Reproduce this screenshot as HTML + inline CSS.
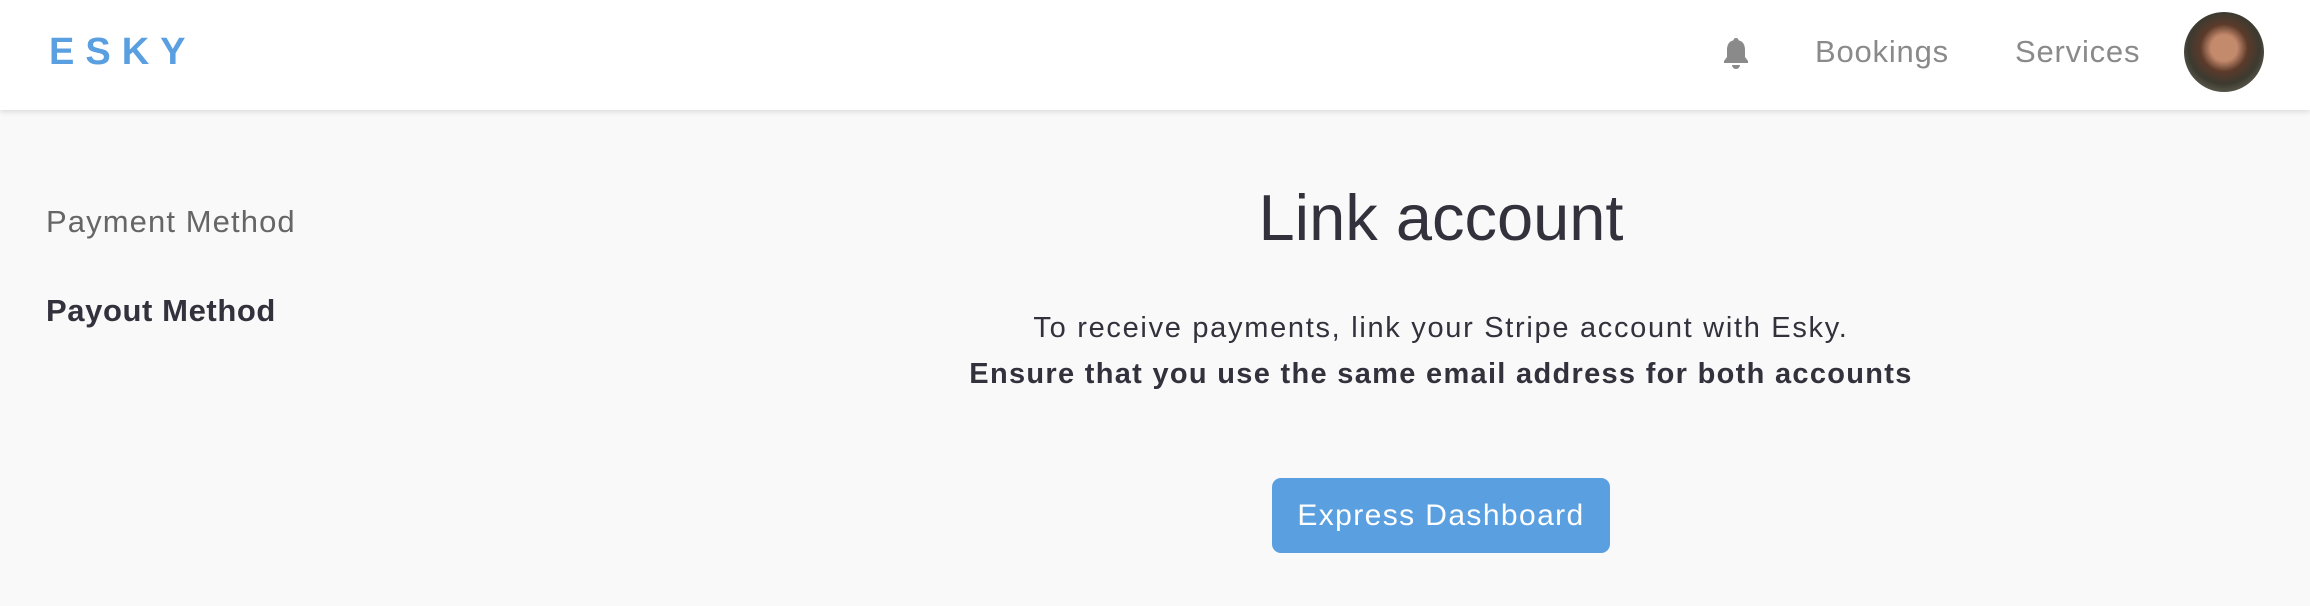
<!DOCTYPE html>
<html><head><meta charset="utf-8"><style>
*{margin:0;padding:0;box-sizing:border-box}
body{width:2310px;height:606px;background:#f9f9f9;font-family:"Liberation Sans",sans-serif;position:relative;overflow:hidden}
.hdr{position:absolute;left:0;top:0;width:2310px;height:110px;background:#fff;box-shadow:0 2px 5px rgba(0,0,0,.12)}
.logo{position:absolute;left:49px;top:30px;font-size:38px;font-weight:bold;color:#5a9fe0;letter-spacing:11px;line-height:44px}
.nav{position:absolute;top:34px;font-size:31px;color:#8a8a8a;line-height:36px;letter-spacing:.8px}
.av{position:absolute;left:2184px;top:12px;width:80px;height:80px;border-radius:50%;background:radial-gradient(circle at 50% 45%,#c48a6c 0 22%,#5b3a2a 40%,#3c3a30 60%,#8a8676 100%)}
.side{position:absolute;left:46px;font-size:31px;line-height:36px}
.c{position:absolute;left:0;width:2882px;text-align:center;color:#33313c}
.btn{position:absolute;left:1272px;top:478px;width:338px;height:75px;background:#5a9fe0;border-radius:9px;color:#fff;font-size:30px;line-height:75px;text-align:center;letter-spacing:1.4px}
</style></head><body>
<div class="hdr">
<div class="logo">ESKY</div>
<svg style="position:absolute;left:1721px;top:36px" width="30" height="34" viewBox="0 0 30 34"><path d="M15 2c-1.5 0-2.5 1-2.5 2.3C7.5 5.5 6 9.5 6 14v7l-3 4v2h24v-2l-3-4v-7c0-4.5-1.5-8.5-6.5-9.7C17.5 3 16.5 2 15 2z M11 29a4 4 0 0 0 8 0z" fill="#8a8a8a"/></svg>
<div class="nav" style="left:1815px">Bookings</div>
<div class="nav" style="left:2015px">Services</div>
<div class="av"></div>
</div>
<div class="side" style="top:204px;color:#666;letter-spacing:1.1px">Payment Method</div>
<div class="side" style="top:293px;color:#33313c;font-weight:bold;letter-spacing:.6px">Payout Method</div>
<div class="c" style="top:180px;font-size:65px;line-height:76px">Link account</div>
<div class="c" style="top:310px;font-size:29px;line-height:36px;letter-spacing:1.7px">To receive payments, link your Stripe account with Esky.</div>
<div class="c" style="top:356px;font-size:29px;line-height:36px;font-weight:bold;letter-spacing:1.3px">Ensure that you use the same email address for both accounts</div>
<div class="btn">Express Dashboard</div>
</body></html>
